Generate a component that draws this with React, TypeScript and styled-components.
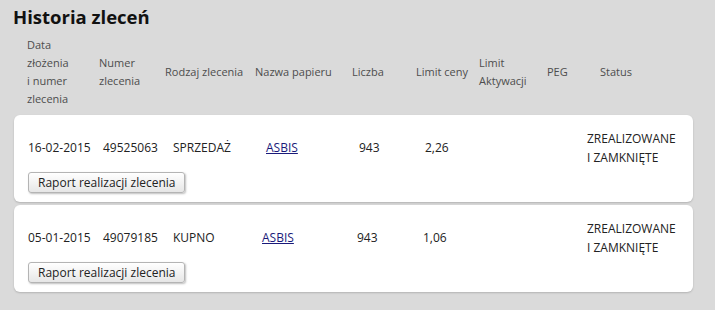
import React from 'react';
import styled, { createGlobalStyle } from 'styled-components';

const GlobalStyle = createGlobalStyle`
    html, body {
        margin: 0;
        background: #dadada;
    }
    body {
        font-family: "Open Sans", "Liberation Sans", sans-serif;
        color: #222;
    }
`

const Page = styled.div`
    padding: 4px 22px 12px 14px;
`

const Title = styled.h1`
    margin: 0 0 0 -1px;
    font-size: 18.5px;
    font-weight: 700;
    line-height: 26px;
    color: #111;
`

const HeaderRow = styled.div`
    display: grid;
    grid-template-columns: 72px 66px 90px 97px 64px 63px 68px 53px 1fr;
    align-items: center;
    padding: 6px 0 7px 13px;
    font-size: 11px;
    line-height: 18px;
    color: #4d4d4d;
`

const HeaderCell = styled.div<{ $wrap?: number }>`
    max-width: ${({ $wrap }) => ($wrap ? `${$wrap}px` : 'none')};
`

const Card = styled.article`
    background: #fff;
    border-radius: 6px;
    box-shadow: 0 1px 2px rgba(0, 0, 0, 0.18);
    padding: 13px 14px 9px 14px;
    margin-bottom: 3px;
`

const DataRow = styled.div`
    display: grid;
    grid-template-columns: 75px 70px 93px 93px 66px 162px 1fr;
    align-items: center;
    font-size: 12px;
    line-height: 19px;
    min-height: 39px;
`

const Cell = styled.div<{ $shift?: number }>`
    margin-left: ${({ $shift }) => $shift || 0}px;
`

const PaperLink = styled.a`
    color: #1a1a7a;
    text-decoration: underline;
`

const Status = styled.div`
    text-transform: uppercase;
    line-height: 19px;
`

const ReportButton = styled.button`
    margin-top: 5px;
    height: 21px;
    padding: 0 9px;
    font-family: inherit;
    font-size: 12px;
    color: #222;
    border: 1px solid #b4b4b4;
    border-radius: 3px;
    background: linear-gradient(#ffffff, #e6e6e6);
    box-shadow: 1px 1px 2px rgba(0, 0, 0, 0.25);
`

type Order = {
    date: string;
    number: string;
    kind: string;
    paper: string;
    qty: string;
    price: string;
    paperShift: number;
    qtyShift: number;
    priceShift: number;
};

const orders: Order[] = [
    { date: '16-02-2015', number: '49525063', kind: 'SPRZEDAŻ', paper: 'ASBIS', qty: '943', price: '2,26', paperShift: 0, qtyShift: 0, priceShift: 0 },
    { date: '05-01-2015', number: '49079185', kind: 'KUPNO', paper: 'ASBIS', qty: '943', price: '1,06', paperShift: -4, qtyShift: -2, priceShift: -2 },
];

// column titles, with the width at which the long ones break into lines
const headers: { label: string; wrap?: number }[] = [
    { label: 'Data złożenia i numer zlecenia', wrap: 44 },
    { label: 'Numer zlecenia', wrap: 50 },
    { label: 'Rodzaj zlecenia' },
    { label: 'Nazwa papieru' },
    { label: 'Liczba' },
    { label: 'Limit ceny' },
    { label: 'Limit Aktywacji', wrap: 52 },
    { label: 'PEG' },
    { label: 'Status' },
];

function App() {
    return (
        <Page>
            <GlobalStyle />
            <Title>Historia zleceń</Title>
            <HeaderRow>
                {headers.map(h => (
                    <HeaderCell key={h.label} $wrap={h.wrap}>{h.label}</HeaderCell>
                ))}
            </HeaderRow>
            {orders.map(order => (
                <Card key={order.number}>
                    <DataRow>
                        <Cell>{order.date}</Cell>
                        <Cell>{order.number}</Cell>
                        <Cell>{order.kind}</Cell>
                        <Cell $shift={order.paperShift}><PaperLink href="#">{order.paper}</PaperLink></Cell>
                        <Cell $shift={order.qtyShift}>{order.qty}</Cell>
                        <Cell $shift={order.priceShift}>{order.price}</Cell>
                        <Status>Zrealizowane<br />i zamknięte</Status>
                    </DataRow>
                    <ReportButton>Raport realizacji zlecenia</ReportButton>
                </Card>
            ))}
        </Page>
    )
}

export default App
